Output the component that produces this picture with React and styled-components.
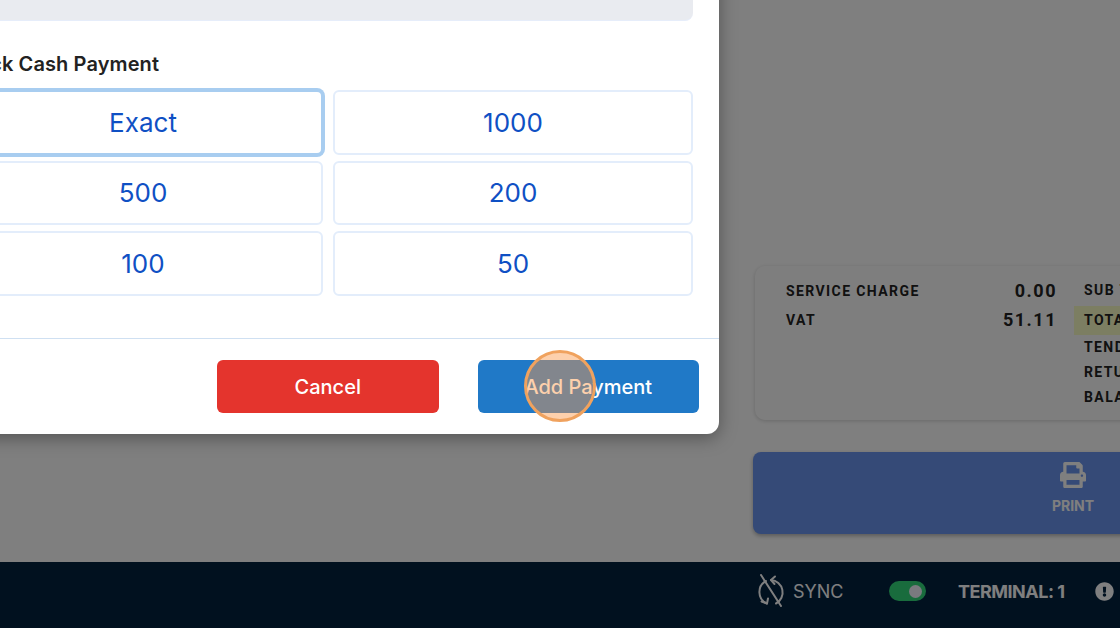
import React from 'react';
import styled, { createGlobalStyle } from 'styled-components';
import { FaExclamationCircle, FaPrint } from 'react-icons/fa';

const Global = createGlobalStyle`
  html, body { margin: 0; padding: 0; height: 100%; overflow: hidden; background: #fff; }
  #root { height: 100%; }
  * { box-sizing: border-box; }
`;
const Page = styled.div`
  position: relative; width: 1120px; height: 628px; overflow: hidden;
  display: flex; flex-direction: column; font-family: Inter, "Liberation Sans", sans-serif;
`;
const Main = styled.main`
  flex: 1; min-height: 0; background: #fff; padding: 266px 0 0 753px;
  display: flex; flex-direction: column; gap: 32px;
`;
const Summary = styled.section`
  width: 420px; height: 154px; margin-left: 2px; background: #fdfdfd; border-radius: 10px;
  box-shadow: 0 1px 4px rgba(0,0,0,.18); display: grid; grid-template-columns: 288px 1fr; padding: 10px 0 0 31px;
  font-family: Roboto, sans-serif; font-weight: 700; color: #222; letter-spacing: 1.4px;
`;
const LeftCol = styled.div`display: grid; grid-auto-rows: 29px; align-content: start;`;
const Line = styled.div`display: flex; justify-content: space-between; align-items: center; font-size: 14px; width: 271px;`;
const Value = styled.span`font-size: 18px; letter-spacing: 1.5px;`;
const RightCol = styled.div`display: flex; flex-direction: column;`;
const RightLine = styled.div`
  height: ${p => p.$h}px; display: flex; align-items: center; padding-left: 10px; font-size: 14px; white-space: nowrap;
  ${p => p.$hl ? 'background: #f9fcc4; margin-top: 2px; padding-bottom: 2px;' : ''}
`;
const PrintBar = styled.div`
  width: 420px; height: 82px; background: #6a95ee; border-radius: 8px; box-shadow: 0 2px 4px rgba(0,0,0,.3);
  display: flex; justify-content: flex-end; padding-right: 55px;
`;
const PrintAction = styled.div`
  width: 90px; display: flex; flex-direction: column; align-items: center; padding-top: 10px; color: #fff;
  font-weight: 700; font-size: 14px; gap: 9px;
`;
const Footer = styled.footer`
  height: 66px; flex: none; background: #02223f; color: #fff; display: flex; align-items: center; padding: 0 0 8px 755px;
`;
const Sync = styled.div`display: flex; align-items: center; gap: 6px; font-size: 18px; width: 134px;`;
const Toggle = styled.div`
  width: 37px; height: 20px; border-radius: 10px; background: #33d97b; margin-right: 32px; display: flex; align-items: center; justify-content: flex-end; padding-right: 4px;
`;
const Knob = styled.div`width: 13px; height: 13px; border-radius: 50%; background: #f4f4ff;`;
const Terminal = styled.div`font-weight: 700; font-size: 18px; letter-spacing: -0.5px; margin-right: 31px; white-space: nowrap;`;
const Backdrop = styled.div`position: absolute; inset: 0; background: rgba(0,0,0,.5);`;
const Modal = styled.div`
  position: absolute; left: -63px; top: -60px; width: 782px; height: 494px; background: #fff; border-radius: 12px;
  box-shadow: 0 4px 18px rgba(0,0,0,.35); display: flex; flex-direction: column;
`;
const Info = styled.div`height: 81px; margin: 0 26px; background: #e9ebf0; border-radius: 8px; border-bottom: 1px solid #e6edfa; flex: none;`;
const Label = styled.h3`
  margin: 30px 20px 13px; font-size: 20px; line-height: 26px; font-weight: 600; color: #222; white-space: nowrap; letter-spacing: 0.1px;
`;
const Grid = styled.div`display: grid; grid-template-columns: 1fr 1fr; gap: 6px 10px; margin: 0 26px; height: 205.5px;`;
const Amount = styled.button`
  height: 64.5px; background: #fff; border: 2px solid ${p => p.$on ? '#a8cdf0' : '#e3edfb'}; border-radius: 6px;
  font: 400 26px Inter, sans-serif; color: #0f50c4; padding: 0;
  ${p => p.$on ? 'box-shadow: 0 0 0 2px #a8cdf0;' : ''}
`;
const Actions = styled.div`
  margin-top: 42.5px; flex: 1; border-top: 1px solid #cfe0f2; display: flex; justify-content: flex-end; align-items: flex-start; gap: 39px; padding: 21px 20px 0 0;
`;
const Action = styled.button`
  width: 221.5px; height: 53px; border: 0; border-radius: 6px; color: #fff; font: 500 20px Inter, sans-serif;
  background: ${p => p.$bg};
`;
const Cursor = styled.div`
  position: absolute; left: 524px; top: 350px; width: 72px; height: 72px; border-radius: 50%;
  border: 3px solid #f0a25e; background: rgba(250,150,70,.45);
`;
const SyncOffIcon = () => (
  <svg width="32" height="34" viewBox="0 0 32 34" fill="none" stroke="currentColor" strokeWidth="2" strokeLinecap="round" strokeLinejoin="round">
    <path d="M11 7A12.5 12.5 0 0 0 12 29.5" />
    <path d="M6.5 27.5L12 29.5L13 24.5" />
    <path d="M16 6A12.5 12.5 0 0 1 21 29.5" />
    <path d="M20 2.5L16 6L19.5 10" />
    <path d="M6 1L26 32" />
  </svg>
);
const amounts = ['Exact', '1000', '500', '200', '100', '50'];
export default function App() {
  return (
    <Page>
      <Global />
      <Main>
        <Summary>
          <LeftCol>
            <Line>SERVICE CHARGE <Value>0.00</Value></Line>
            <Line>VAT <Value>51.11</Value></Line>
          </LeftCol>
          <RightCol>
            <RightLine $h={28}>SUB TOTAL</RightLine>
            <RightLine $h={29} $hl>TOTAL</RightLine>
            <RightLine $h={24}>TENDERED</RightLine>
            <RightLine $h={26}>RETURN</RightLine>
            <RightLine $h={24}>BALANCE</RightLine>
          </RightCol>
        </Summary>
        <PrintBar>
          <PrintAction><FaPrint size={26} />PRINT</PrintAction>
        </PrintBar>
      </Main>
      <Footer>
        <Sync><SyncOffIcon />SYNC</Sync>
        <Toggle><Knob /></Toggle>
        <Terminal>TERMINAL: 1</Terminal>
        <FaExclamationCircle size={19} />
      </Footer>
      <Backdrop />
      <Modal>
        <Info />
        <Label>Quick Cash Payment</Label>
        <Grid>
          {amounts.map((a, i) => <Amount key={a} $on={i === 0}>{a}</Amount>)}
        </Grid>
        <Actions>
          <Action $bg="#e4342d">Cancel</Action>
          <Action $bg="#2079c7">Add Payment</Action>
        </Actions>
      </Modal>
      <Cursor />
    </Page>
  );
}
